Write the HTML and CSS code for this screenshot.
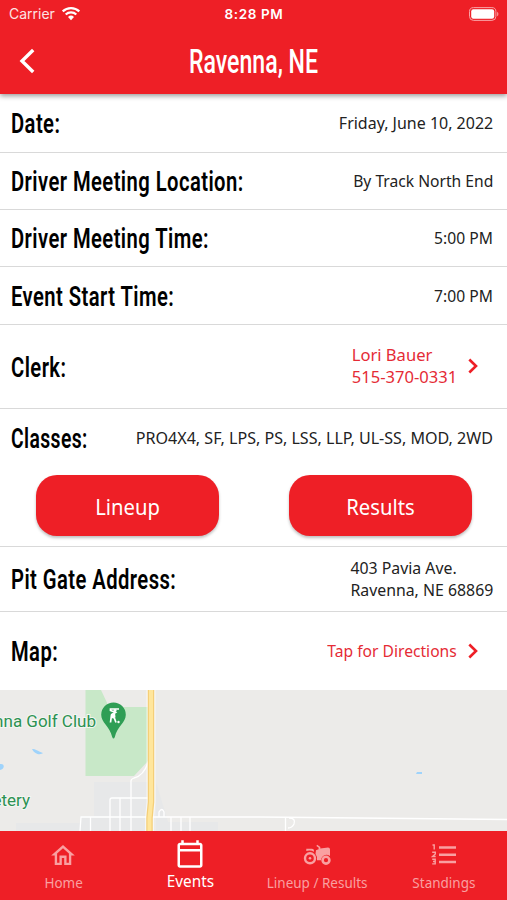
FILE: index.html
```html
<!DOCTYPE html>
<html lang="en">
<head>
    <meta charset="UTF-8">
    <meta name="viewport" content="width=device-width, initial-scale=1.0">
    <title>Ravenna, NE</title>
    <link rel="stylesheet" href="styles.css">
</head>
<body>
    <header class="header">
        <div class="status-bar">
            <div class="carrier">
                <span>Carrier</span>
                <svg class="wifi" width="20" height="15" viewBox="0 0 20 15">
                    <path d="M1.7 5.4a12 12 0 0 1 16.6 0" />
                    <path d="M4.7 8.5a7.7 7.7 0 0 1 10.6 0" />
                    <path class="wifi-dot" d="M7 11a4.4 4.4 0 0 1 6 0l-3 3.2z" />
                </svg>
            </div>
            <div class="clock">8:28 PM</div>
            <div class="battery">
                <svg width="30" height="14" viewBox="0 0 30 14">
                    <rect x="0.5" y="0.6" width="26.4" height="12.8" rx="4" fill="none" stroke="#f9a3a5" />
                    <rect x="2.2" y="2.3" width="23" height="9.4" rx="2.2" fill="#fff" />
                    <path d="M28.2 4.7c1.6.8 1.6 3.8 0 4.6z" fill="#f9a3a5" />
                </svg>
            </div>
        </div>
        <div class="title-bar">
            <svg class="back" width="18" height="26" viewBox="0 0 18 26">
                <path d="M15.2 2 L4 13 L15.2 24" />
            </svg>
            <h1>Ravenna, NE</h1>
        </div>
    </header>

    <main>
        <div class="row date">
            <h2>Date:</h2>
            <p>Friday, June 10, 2022</p>
        </div>
        <div class="row">
            <h2>Driver Meeting Location:</h2>
            <p>By Track North End</p>
        </div>
        <div class="row">
            <h2>Driver Meeting Time:</h2>
            <p>5:00 PM</p>
        </div>
        <div class="row start">
            <h2>Event Start Time:</h2>
            <p>7:00 PM</p>
        </div>
        <div class="row clerk">
            <h2>Clerk:</h2>
            <a class="link">
                <p>Lori Bauer<br>515-370-0331</p>
                <svg width="12" height="16" viewBox="0 0 12 16"><path d="M2.3 1.5 L9 8 L2.3 14.5" /></svg>
            </a>
        </div>
        <div class="classes">
            <div class="row">
                <h2>Classes:</h2>
                <p>PRO4X4, SF, LPS, PS, LSS, LLP, UL-SS, MOD, 2WD</p>
            </div>
            <div class="buttons">
                <button><span>Lineup</span></button>
                <button><span>Results</span></button>
            </div>
        </div>
        <div class="row address">
            <h2>Pit Gate Address:</h2>
            <p>403 Pavia Ave.<br>Ravenna, NE 68869</p>
        </div>
        <div class="row directions">
            <h2>Map:</h2>
            <a class="link">
                <p>Tap for Directions</p>
                <svg width="12" height="16" viewBox="0 0 12 16"><path d="M2.3 1.5 L9 8 L2.3 14.5" /></svg>
            </a>
        </div>
        <svg class="map" width="507" height="141" viewBox="0 0 507 141">
            <rect width="507" height="141" fill="#ecebe9" />
            <!-- built-up area -->
            <path d="M94 92H148V141H16V133H80V126H94zM156 92l6 20 6 20h50v9h-62z" fill="#e7e8e9" />
            <!-- golf course -->
            <path d="M85.500 0H101L109 17H148V71L134 86H85.500z" fill="#c8e8c8" />
            <path d="M32 59c4 0 5 2 11 4-2 2-8 2-11-4z" fill="#9fd3fb" />
            <path d="M0 74c5-1 5 5 0 6z" fill="#9fd3fb" />
            <path d="M417 82h5v2h-6z" fill="#9fd3fb" />
            <!-- streets -->
            <g fill="none" stroke="#fff" stroke-width="1.300">
                <path d="M149 70Q144 86 134 88Q131 89 131 91V141" />
                <path d="M110 141V110Q110 108 112 108H150M120 108V141" />
                <path d="M80 141L81 127H260L507 129.500M90.500 127V141" />
                <path d="M159 127V122Q162 117 164 122V127M171 127V141M181 127V141M190 127V141" />
                <path d="M285.500 141V128M289 128Q296 128 294 134Q292 138 288 138" />
            </g>
            <path d="M151 0V112L149.500 128V141" fill="none" stroke="#fff" stroke-width="9" opacity=".6" />
            <path d="M151 0V112L149.500 128V141" fill="none" stroke="#f5cf78" stroke-width="6.500" />
            <path d="M151 0V112L149.500 128V141" fill="none" stroke="#ffe69c" stroke-width="4" />
            <g class="places">
                <text x="96" y="37" text-anchor="end">Ravenna Golf Club</text>
                <text x="30" y="116" text-anchor="end">Cemetery</text>
            </g>
            <path d="M113.500 12.500a12.300 12.300 0 0 1 12.300 12.300c0 8-8.500 11.500-11 22.200q-1.300 3-2.600 0c-2.500-10.700-11-14.200-11-22.200a12.300 12.300 0 0 1 12.300-12.300z" fill="#2f9e55" />
            <g fill="none" stroke="#fff" stroke-width="1.700">
                <path d="M119 19h-8.500v1.500l5 2-4 2.500-1 7.500" />
                <path d="M111.500 25.500l3 3 1.500 4" />
            </g>
            <path d="M111 24l4-2 .5 5.500-4 1z" fill="#fff" />
            <circle cx="115" cy="20.500" r="1.500" fill="#fff" />
            <circle cx="118.500" cy="32" r="1.200" fill="#fff" />
        </svg>
    </main>

    <nav class="tabs">
        <a class="tab home">
            <svg width="28" height="26" viewBox="1 0.500 22 22"><path fill="currentColor" d="M12 5.690L17 10.190V18H15V12H9V18H7V10.190L12 5.690M12 3L2 12H5V20H11V14H13V20H19V12H22" /></svg>
            <span>Home</span>
        </a>
        <a class="tab active">
            <svg width="30" height="30" viewBox="0 0 24 24"><path fill="currentColor" d="M20 3h-1V1h-2v2H7V1H5v2H4c-1.100 0-2 .9-2 2v16c0 1.100.9 2 2 2h16c1.100 0 2-.9 2-2V5c0-1.100-.9-2-2-2zm0 18H4V10h16v11zm0-13H4V5h16v3z" /></svg>
            <span>Events</span>
        </a>
        <a class="tab">
            <svg width="28" height="26" viewBox="0 0 28 26">
                <circle cx="7" cy="16.300" r="5" fill="none" stroke="currentColor" stroke-width="2.400" />
                <circle cx="7" cy="16.300" r="1.300" fill="currentColor" />
                <circle cx="23" cy="18.200" r="3.400" fill="none" stroke="currentColor" stroke-width="2.600" />
                <path fill="currentColor" d="M3.300 6.800H9q2 0 2 2V9.700Q7 7.600 3.300 9zM13 8.300l2.600-1V5.600L13.300 4l.9-1.300L17.300 5v1.400L25 5.400q2 0 2 2v6.500q-4.600-2.400-7.600.8-1.300 1.400-1.400 3.500h-4q.4-4-1.500-6.200z" />
            </svg>
            <span>Lineup / Results</span>
        </a>
        <a class="tab">
            <svg width="26" height="26" viewBox="0 0 26 26">
                <path d="M8 5.500H25M8 12.700H25M8 20H25" fill="none" stroke="currentColor" stroke-width="2.500" />
                <path d="M1.500 3H3.200V7.500M1.200 10.200H4.300V12L1.600 14.500H4.700M1.200 17.200H4.200V21.900H1.200M2 19.500H4.200" fill="none" stroke="currentColor" stroke-width="1.400" />
            </svg>
            <span>Standings</span>
        </a>
    </nav>
</body>
</html>
```
FILE: styles.css
```css
* { box-sizing: border-box; }
body {
    margin: 0;
    width: 507px;
    height: 900px;
    overflow: hidden;
    display: flex;
    flex-direction: column;
    background: #fff;
    color: #222;
    font-family: "Noto Sans", sans-serif;
}
h1, h2, p { margin: 0; }

/* Header */
.header {
    height: 94px;
    background: #ee1f26;
    color: #fff;
    box-shadow: 0 2px 5px rgba(0, 0, 0, 0.4);
    position: relative;
    z-index: 1;
}
.status-bar {
    height: 27px;
    padding: 0 8px 0 9px;
    display: grid;
    grid-template-columns: 1fr auto 1fr;
    align-items: center;
    font-family: Inter, sans-serif;
    font-size: 14px;
}
.carrier { display: flex; align-items: center; gap: 6px; color: #fde3e4; }
.wifi { fill: none; stroke: #fff; stroke-width: 2.2; }
.wifi-dot { fill: #fff; stroke: none; }
.clock { font-size: 13.5px; font-weight: 600; letter-spacing: 0.6px; }
.battery { display: flex; justify-content: flex-end; }
.title-bar {
    height: 67px;
    padding: 0 18px;
    display: grid;
    grid-template-columns: 18px 1fr 18px;
    align-items: center;
}
.back { fill: none; stroke: #fff; stroke-width: 3.4; }
h1 {
    font: 500 33px/40px Roboto, sans-serif;
    text-align: center;
    transform: scaleX(0.7);
    padding-top: 3px;
}

/* Details */
.row {
    height: 57px;
    padding: 0 14px 0 11px;
    border-bottom: 1px solid #d9d9d9;
    display: flex;
    align-items: center;
    justify-content: space-between;
    white-space: nowrap;
}
.row h2 {
    font: 600 28px/34px Roboto, sans-serif;
    letter-spacing: 0.6px;
    color: #000;
    transform: scaleX(0.722);
    transform-origin: left;
    width: 0;
    padding-top: 2px;
}
.row p {
    font-size: 17px;
    line-height: 22px;
    transform: scaleX(0.92);
    transform-origin: right;
}
.row.date { height: 59px; }
.date p { transform: scaleX(0.94); }
.start { height: 58px; }
.clerk { height: 84px; }
.clerk p { transform: scaleX(0.975); }
.clerk .link { padding-bottom: 1px; }
.link {
    display: flex;
    align-items: center;
    gap: 10px;
    color: #e52b35;
    padding-right: 14px;
}
.link svg { fill: none; stroke: #ee1f26; stroke-width: 2.6; }
.classes { height: 138px; border-bottom: 1px solid #d9d9d9; }
.classes .row { border: 0; }
.classes h2 { transform: scaleX(0.69); }
.classes p { transform: scaleX(0.945); }
.buttons { display: flex; gap: 70px; padding: 9px 35px 0 36px; }
.buttons button {
    flex: 1;
    height: 61px;
    border: 0;
    border-radius: 21px;
    background: #ee1f26;
    color: #fff;
    font: 22px "Noto Sans", sans-serif;
    box-shadow: 0 2px 3px rgba(0, 0, 0, 0.25);
}
.buttons span { display: block; transform: scaleX(0.92); }
.address { height: 65px; }
.address p { transform: scaleX(0.932); }
.directions { height: 78px; border: 0; }
.map { display: block; }
.places {
    font: 400 17px Roboto, sans-serif;
    fill: #2c9152;
    stroke: #f4f6f2;
    stroke-width: 2px;
    paint-order: stroke;
}

/* Bottom tabs */
.tabs {
    height: 69px;
    background: #ee1f26;
    display: grid;
    grid-template-columns: repeat(4, 1fr);
}
.tab {
    display: flex;
    flex-direction: column;
    align-items: center;
    padding-top: 11px;
    color: #f9a0a1;
    font-size: 14.5px;
    line-height: 20px;
    white-space: nowrap;
}
.tab svg { height: 26px; }
.tab span { margin-top: 4px; transform: scaleX(0.93); }
.active { color: #fff; font-size: 16.5px; padding-top: 8px; }
.active svg { height: 30px; }
.active span { margin-top: 2px; }
```
